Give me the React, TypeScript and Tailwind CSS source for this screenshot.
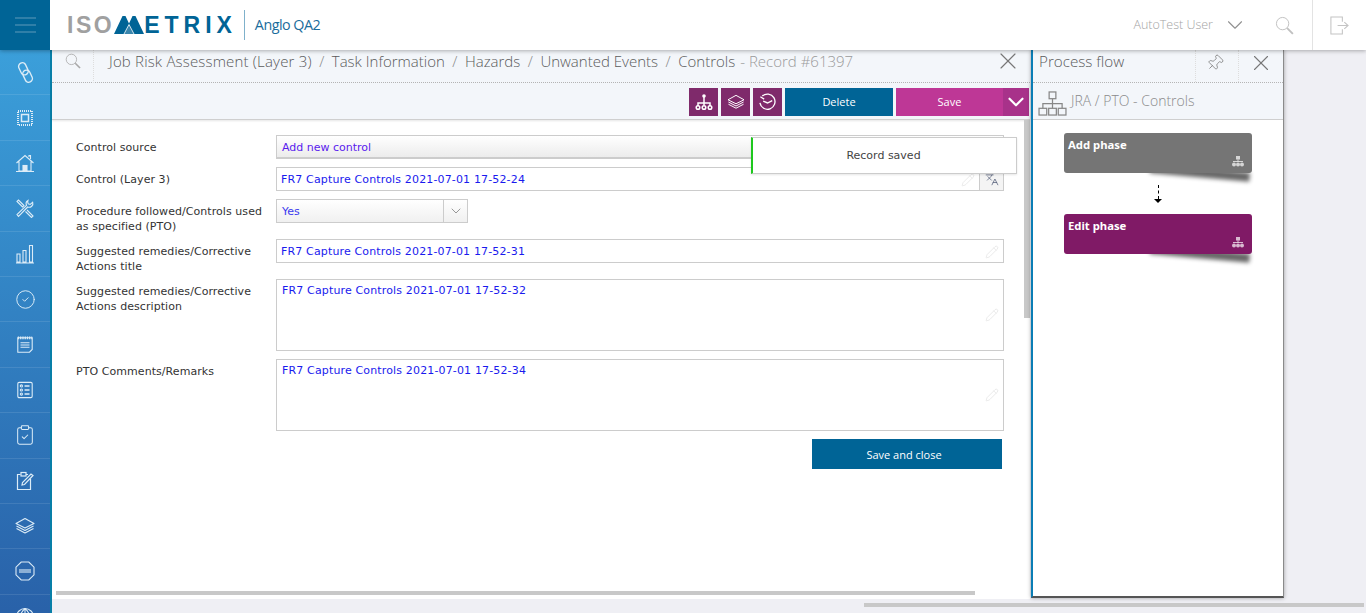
import React from 'react';
import { ChevronDown, CircleCheck, ClipboardCheck, Languages, Pencil, Pin, X } from 'lucide-react';

const light = "font-['Open_Sans',sans-serif] font-light";
const form = "font-['DejaVu_Sans',sans-serif] text-[11px] leading-[15px]";

const Magnifier = ({ className }: { className: string }) => (
  <svg viewBox="0 0 20 20" className={className} fill="none" stroke="currentColor">
    <circle cx="8" cy="8" r="6.500" strokeWidth="1" />
    <path d="m12.800 12.800 6 6" strokeWidth="2" />
  </svg>
);
const Chain = () => (
  <svg viewBox="0 0 20 20" className="w-[21px] h-[21px]" fill="none" stroke="currentColor" strokeWidth="1.300">
    <rect x="4.500" y="0.500" width="7" height="12" rx="3.500" transform="rotate(-25 8 6.500)" />
    <rect x="8.500" y="7.500" width="7" height="12" rx="3.500" transform="rotate(-25 12 13.500)" />
  </svg>
);
const Chip = () => (
  <svg viewBox="0 0 16 16" className="w-4 h-4" fill="none" stroke="currentColor">
    <rect x="1" y="1" width="14" height="14" strokeWidth="2" strokeDasharray="1 1" />
    <rect x="4.500" y="4.500" width="7" height="7" strokeWidth="1.500" />
  </svg>
);
const House = () => (
  <svg viewBox="0 0 20 20" className="w-5 h-5" fill="none" stroke="currentColor" strokeWidth="1.100">
    <path d="M1.500 10 10 2.500l8.500 7.500M4 8.500V18h12V8.500M14 4V2.500h1.500V6M1 18.500h18" />
    <rect x="8" y="12.500" width="4" height="5.500" fill="currentColor" />
  </svg>
);
const Tools = () => (
  <svg viewBox="0 0 20 20" className="w-5 h-5" fill="none" stroke="currentColor" strokeWidth="1.100">
    <path d="M2 3.500 3.500 2 9 7.500 7.500 9zM12 12l6 6-1.500 1.500-6-6" />
    <path d="M13 2.500a3.800 3.800 0 0 0-1.500 4.800L2 16.500 3.500 18.500l9.200-9.500a3.800 3.800 0 0 0 5-4.700l-2.500 2.200-2-.6-.5-2z" />
  </svg>
);
const Bars = () => (
  <svg viewBox="0 0 20 20" className="w-5 h-5" fill="none" stroke="currentColor" strokeWidth="1.100">
    <path d="M1 19h18M2 18v-8h3v8zM8 18V6.500h3V18zM14.500 18V1.500h3V18z" />
  </svg>
);
const Notepad = () => (
  <svg viewBox="0 0 20 20" className="w-[18px] h-[18px]" fill="none" stroke="currentColor" strokeWidth="1.200">
    <path d="M2 2h16v13l-3 3H2z" />
    <path d="M2 2h16" strokeWidth="3" strokeDasharray="1.500 1" />
    <path d="M5 7.500h10M5 10h10M5 12.500h10" />
  </svg>
);
const Checklist = () => (
  <svg viewBox="0 0 20 20" className="w-[18px] h-[18px]" fill="none" stroke="currentColor" strokeWidth="1.200">
    <rect x="2" y="1.500" width="16" height="17" rx="1.500" />
    <circle cx="6" cy="5.500" r="1.200" />
    <circle cx="6" cy="10" r="1.200" />
    <circle cx="6" cy="14.500" r="1.200" />
    <path d="M9.500 5.500H15M9.500 10H15M9.500 14.500H15" strokeWidth="1.800" />
  </svg>
);
const ClipPen = () => (
  <svg viewBox="0 0 20 20" className="w-5 h-5" fill="none" stroke="currentColor" strokeWidth="1.200">
    <path d="M15.500 8v10.500h-13V3.500h3M11 3.500h2" />
    <rect x="6" y="1.500" width="5" height="3.500" />
    <path d="m7 14 .5-2.500L16 3l2 1.500-8.500 9z" />
  </svg>
);
const Stack = ({ className }: { className: string }) => (
  <svg viewBox="0 0 20 18" className={className} fill="none" stroke="currentColor" strokeWidth="1.100" strokeLinejoin="round">
    <path d="M10 1.500 19 6.500 10 11 1 6.500z" />
    <path d="M1.500 9 10 13.500 18.500 9" />
    <path d="M1.500 11.500 10 16 18.500 11.500" />
  </svg>
);
const Risk = () => (
  <svg viewBox="0 0 20 20" className="w-5 h-5" fill="none" stroke="currentColor" strokeWidth="1.100">
    <path d="M6.200 1h7.600L19 6.200v7.600L13.800 19H6.200L1 13.800V6.200z" />
    <rect x="4" y="8" width="12" height="4" fill="currentColor" stroke="none" opacity="0.550" />
  </svg>
);
const Globe = () => (
  <svg viewBox="0 0 20 20" className="w-5 h-5" fill="none" stroke="currentColor" strokeWidth="1.100">
    <circle cx="10" cy="10" r="8.500" />
    <path d="M1.500 10h17M10 1.500v17M10 1.500c-6 5-6 12 0 17M10 1.500c6 5 6 12 0 17" />
  </svg>
);
const Hierarchy = ({ className }: { className: string }) => (
  <svg viewBox="0 0 30 26" className={className} fill="none" stroke="currentColor" strokeWidth="1.300">
    <rect x="11.500" y="1" width="7" height="7" />
    <path d="M15 8v5M5 18v-5h20v5M15 13v5" />
    <rect x="1" y="18" width="8" height="7" />
    <rect x="11" y="18" width="8" height="7" />
    <rect x="21" y="18" width="8" height="7" />
  </svg>
);
const FlowSmall = ({ className }: { className: string }) => (
  <svg viewBox="0 0 12 11" className={className} fill="currentColor">
    <rect x="4" y="0" width="4" height="3.500" />
    <rect x="5.500" y="3.500" width="1" height="2" />
    <rect x="1" y="5" width="10" height="1" />
    <circle cx="2" cy="8.500" r="2" />
    <circle cx="6" cy="8.500" r="2" />
    <circle cx="10" cy="8.500" r="2" />
  </svg>
);
const OrgTree = () => (
  <svg viewBox="0 0 18 18" className="w-[18px] h-[18px]" fill="none" stroke="currentColor" strokeWidth="1.500">
    <circle cx="9" cy="3" r="1.800" fill="currentColor" stroke="none" />
    <path d="M9 4v8M3 13v-3h12v3" />
    <circle cx="3" cy="14.500" r="1.800" />
    <circle cx="9" cy="14.500" r="1.800" />
    <circle cx="15" cy="14.500" r="1.800" />
  </svg>
);
const History = () => (
  <svg viewBox="0 0 20 20" className="w-[19px] h-[19px]" fill="none" stroke="currentColor" strokeWidth="1.400">
    <path d="M2.500 4 6.500 6.500M4.500 3.200A8 8 0 1 1 2 10.500" />
    <path d="M5.500 8.500l4.500 2 5-2.500" />
  </svg>
);
const Exit = () => (
  <svg viewBox="0 0 22 22" className="w-[21px] h-[21px]" fill="none" stroke="currentColor" strokeWidth="1.100">
    <path d="M14 7V2H2v18h12v-5M9 11h11M16 7.500l4 3.500-4 3.500" />
  </svg>
);

const sideIcons = [
  <Chain />, <Chip />, <House />, <Tools />, <Bars />,
  <CircleCheck className="w-[21px] h-[21px]" strokeWidth={1.100} />,
  <Notepad />, <Checklist />,
  <ClipboardCheck className="w-[22px] h-[22px]" strokeWidth={1.100} />,
  <ClipPen />,
  <Stack className="w-5 h-[18px]" />,
  <Risk />, <Globe />,
];

const crumbs = ['Task Information', 'Hazards', 'Unwanted Events', 'Controls'];

const Field = ({ value, translate }: { value: string; translate?: boolean }) => (
  <div className="relative w-[728px] h-6 border border-[#cccccc] bg-white flex items-center pl-1 text-[#1a1aee] tracking-[0.150px]">
    <span className="flex-1">{value}</span>
    <Pencil className={`absolute top-[5px] ${translate ? 'right-[28px]' : 'right-[4px]'} w-[14px] h-[14px] text-[#dddddd]`} strokeWidth={1} />
    {translate && (
      <div className="h-full w-6 border-l border-[#cccccc] bg-[#f4f4f4] flex items-center justify-center">
        <Languages className="w-[14px] h-[14px] text-[#555f7a]" strokeWidth={1.300} />
      </div>
    )}
  </div>
);

const TextArea = ({ value }: { value: string }) => (
  <div className="relative w-[728px] h-[72px] border border-[#cccccc] bg-white pl-[5px] pt-[3px] text-[#1a1aee] tracking-[0.150px]">
    {value}
    <Pencil className="absolute top-[28px] right-[4px] w-[14px] h-[14px] text-[#dddddd]" strokeWidth={1} />
  </div>
);

const Row = ({ label, className, children }: { label: React.ReactNode; className?: string; children: React.ReactNode }) => (
  <div className={`flex mb-2 ${className ?? ''}`}>
    <div className="w-[200px] pt-[5px] pr-3 text-[#333333] tracking-[0.060px]">{label}</div>
    {children}
  </div>
);

const Phase = ({ title, color }: { title: string; color: string }) => (
  <div className="relative w-[188px] h-10">
    <div className="absolute left-[86px] top-[31px] w-[100px] h-[9px] bg-black/60 blur-[2px] rotate-[5deg] origin-left" />
    <div className={`relative h-full rounded-[3px] ${color} text-white px-1 pt-[3px] font-['Noto_Sans',sans-serif] text-[11.300px] leading-[17px] font-bold`}>
      {title}
      <div className="absolute right-2 bottom-[6px] text-white/70"><FlowSmall className="w-3 h-[11px]" /></div>
    </div>
  </div>
);

export default function App() {
  return (
    <div className="relative w-[1366px] h-[613px] overflow-hidden bg-[#efeff4] flex flex-col">
      <header className="relative z-20 h-[50px] shrink-0 bg-white shadow-[0_1px_4px_rgba(0,0,0,0.3)] flex items-center">
        <div className="w-[50px] h-full bg-[#006496] flex flex-col items-center justify-center gap-[5px]">
          <div className="w-[21px] h-[2px] bg-[#2f7fa8]" />
          <div className="w-[21px] h-[2px] bg-[#2f7fa8]" />
          <div className="w-[21px] h-[2px] bg-[#2f7fa8]" />
        </div>
        <div className="ml-[17px] flex items-center font-['Liberation_Sans',sans-serif] font-bold text-[23px] tracking-[2.500px]">
          <span className="text-[#a0a0a0]">ISO</span>
          <svg viewBox="0 0 30 18" className="w-[30px] h-[18px]" fill="#006496">
            <path d="M0 18 8.500 0h3L15 7.500 18.500 0h3L30 18z" />
            <path d="M10 18 15 8.500 20 18" fill="#3a86ad" stroke="#ffffff" strokeWidth="0.800" />
          </svg>
          <span className="text-[#006496] tracking-[5px]">ETRIX</span>
        </div>
        <div className="w-px h-[30px] bg-[#7fb1cb] ml-[7px]" />
        <span className="ml-[10px] text-[#1a6c9c] text-[14.300px] font-['Open_Sans',sans-serif] tracking-[-0.500px]">Anglo QA2</span>
        <div className="ml-auto flex items-center h-full text-[#a5a5a5]">
          <span className={`${light} text-[12.500px]`}>AutoTest User</span>
          <ChevronDown className="w-[26px] h-[26px] ml-[9px] text-[#909090]" strokeWidth={1} />
          <Magnifier className="w-[19px] h-[19px] ml-[27px] text-[#c0c0c0]" />
          <div className="ml-[18px] w-px h-full bg-[#e3e3e3]" />
          <div className="w-[53px] flex justify-center text-[#c4c4c4]"><Exit /></div>
        </div>
      </header>
      <div className="flex flex-1 min-h-0">
        <aside className="w-[52px] h-[596px] shrink-0 border-r-2 border-[#087fa8] bg-gradient-to-b from-[#3b9fda] to-[#285ea6] text-[#dcecf7]">
          {sideIcons.map((icon, i) => (
            <div key={i} className="h-[45.400px] border-b border-white/10 flex items-center justify-center">
              {icon}
            </div>
          ))}
        </aside>
        <main className="relative w-[978px] h-[549px] shrink-0 bg-white">
          <div className={`h-[33px] pb-[10px] bg-[#f3f6fa] border-b border-dotted border-[#b5b5b5] flex items-center ${light} text-[15px] text-[#5a5a5a]`}>
            <div className="w-[42px] h-[33px] -mb-[10px] border-r border-dotted border-[#dddddd] flex items-start pt-[3px] justify-center">
              <Magnifier className="w-4 h-4 text-[#a8a8a8]" />
            </div>
            <div className="ml-[15px] flex items-center">
              <span className="tracking-[0.180px]">Job Risk Assessment (Layer 3)</span>
              {crumbs.map((c) => (
                <React.Fragment key={c}>
                  <span className="mx-[7.500px] text-[#888888]">/</span>
                  <span>{c}</span>
                </React.Fragment>
              ))}
              <span className="ml-[5px] text-[#9a9a9a]">- Record #61397</span>
            </div>
            <X className="ml-auto mr-[8px] w-7 h-7 text-[#777777]" strokeWidth={1} />
          </div>
          <div className="h-[37px] bg-[#f3f6fa] border-b border-[#cfcfcf] shadow-[0_1px_2px_rgba(0,0,0,0.1)] flex items-start justify-end pt-[5px] pr-px gap-[3px] text-white font-['Open_Sans',sans-serif] text-[11px]">
            <div className="w-[29px] h-7 bg-[#7f2a6b] flex items-center justify-center"><OrgTree /></div>
            <div className="w-[29px] h-7 bg-[#7f2a6b] flex items-center justify-center"><Stack className="w-[18px] h-[16px]" /></div>
            <div className="w-[29px] h-7 bg-[#7f2a6b] flex items-center justify-center"><History /></div>
            <div className="w-[108px] h-7 pt-px bg-[#006496] flex items-center justify-center">Delete</div>
            <div className="flex h-7 w-[133px]">
              <div className="flex-1 pt-px bg-[#be3796] flex items-center justify-center">Save</div>
              <div className="w-[26px] bg-[#a8328a] flex items-center justify-center"><ChevronDown className="w-[26px] h-[26px] shrink-0" strokeWidth={2} /></div>
            </div>
          </div>
          <div className={`${form} pl-6 pt-[15px]`}>
            <Row label="Control source">
              <div className="relative w-[728px] h-6 border border-[#cccccc] border-b-2 bg-gradient-to-b from-white to-[#ececec] pl-[5px] pt-px flex items-center text-[#5a1aee]">Add new control</div>
            </Row>
            <Row label="Control (Layer 3)"><Field value="FR7 Capture Controls 2021-07-01 17-52-24" translate /></Row>
            <Row label="Procedure followed/Controls used as specified (PTO)" className="h-8">
              <div className="w-[192px] h-6 border border-[#cccccc] bg-gradient-to-b from-white to-[#f0f0f0] flex items-center text-[#3a3aee]">
                <span className="flex-1 pl-[5px]">Yes</span>
                <div className="w-[24px] h-full border-l border-[#cccccc] flex items-center justify-center">
                  <ChevronDown className="w-4 h-4 text-[#666666]" strokeWidth={1} />
                </div>
              </div>
            </Row>
            <Row label="Suggested remedies/Corrective Actions title" className="h-8"><Field value="FR7 Capture Controls 2021-07-01 17-52-31" /></Row>
            <Row label="Suggested remedies/Corrective Actions description"><TextArea value="FR7 Capture Controls 2021-07-01 17-52-32" /></Row>
            <Row label="PTO Comments/Remarks"><TextArea value="FR7 Capture Controls 2021-07-01 17-52-34" /></Row>
            <div className="w-[926px] flex justify-end">
              <div className="w-[190px] h-[30px] pr-[6px] bg-[#006496] text-white flex items-center justify-center font-['Open_Sans',sans-serif] text-[11px]">Save and close</div>
            </div>
          </div>
          <div className={`absolute left-[699px] top-[87px] w-[266px] h-[37px] pr-[2px] bg-white border border-[#cccccc] border-l-2 border-l-[#1ec81e] shadow-[0_1px_2px_rgba(0,0,0,0.1)] flex items-center justify-center text-[#444444] ${form}`}>Record saved</div>
          <div className="absolute left-[972px] top-[70px] w-[6px] h-[198px] bg-[#c8c8c8]" />
          <div className="absolute left-1 top-[541px] w-[919px] h-1 bg-[#c8c8c8]" />
        </main>
        <section className="relative z-10 ml-px w-[253px] h-[548px] shrink-0 bg-white border-l-2 border-[#0a7db5] border-r border-r-[#8a8a8a] border-b-2 border-b-[#555555] shadow-[0_0_4px_rgba(0,0,0,0.35)]">
          <div className={`h-[33px] bg-[#f3f6fa] border-b border-dotted border-[#b5b5b5] flex items-center ${light} text-[#5a5a5a]`}>
            <span className="pl-[6px] pb-[9px] flex-1 text-[15.200px]">Process flow</span>
            <div className="w-[43px] h-full border-l border-dotted border-[#dddddd] flex items-center justify-center pb-[6px] pr-[5px]">
              <Pin className="w-[18px] h-[18px] rotate-45 text-[#777777]" strokeWidth={1} />
            </div>
            <div className="w-[45px] h-full border-l border-dotted border-[#dddddd] flex items-center justify-center pb-[6px]">
              <X className="w-[26px] h-[26px] text-[#777777]" strokeWidth={1} />
            </div>
          </div>
          <div className={`h-[37px] bg-[#f3f6fa] border-b border-[#cfcfcf] flex items-center pl-[5px] gap-1 ${light} text-[14px] text-[#8a8a8a]`}>
            <Hierarchy className="w-[29px] h-[25px] text-[#888888] mt-1" />
            <span className="-mt-[1px]">JRA / PTO - Controls</span>
          </div>
          <div className="pt-[13px] pl-[31px]">
            <Phase title="Add phase" color="bg-[#757575]" />
            <div className="w-[188px] h-[41px] flex flex-col items-center pt-[12px]">
              <div className="h-[14px] border-l border-dashed border-black" />
              <div className="w-0 h-0 border-x-[4px] border-x-transparent border-t-[4px] border-t-black" />
            </div>
            <Phase title="Edit phase" color="bg-[#801a66]" />
          </div>
        </section>
      </div>
      <div className="absolute left-[864px] top-[603px] w-[500px] h-1 bg-[#c8c8c8]" />
    </div>
  );
}
